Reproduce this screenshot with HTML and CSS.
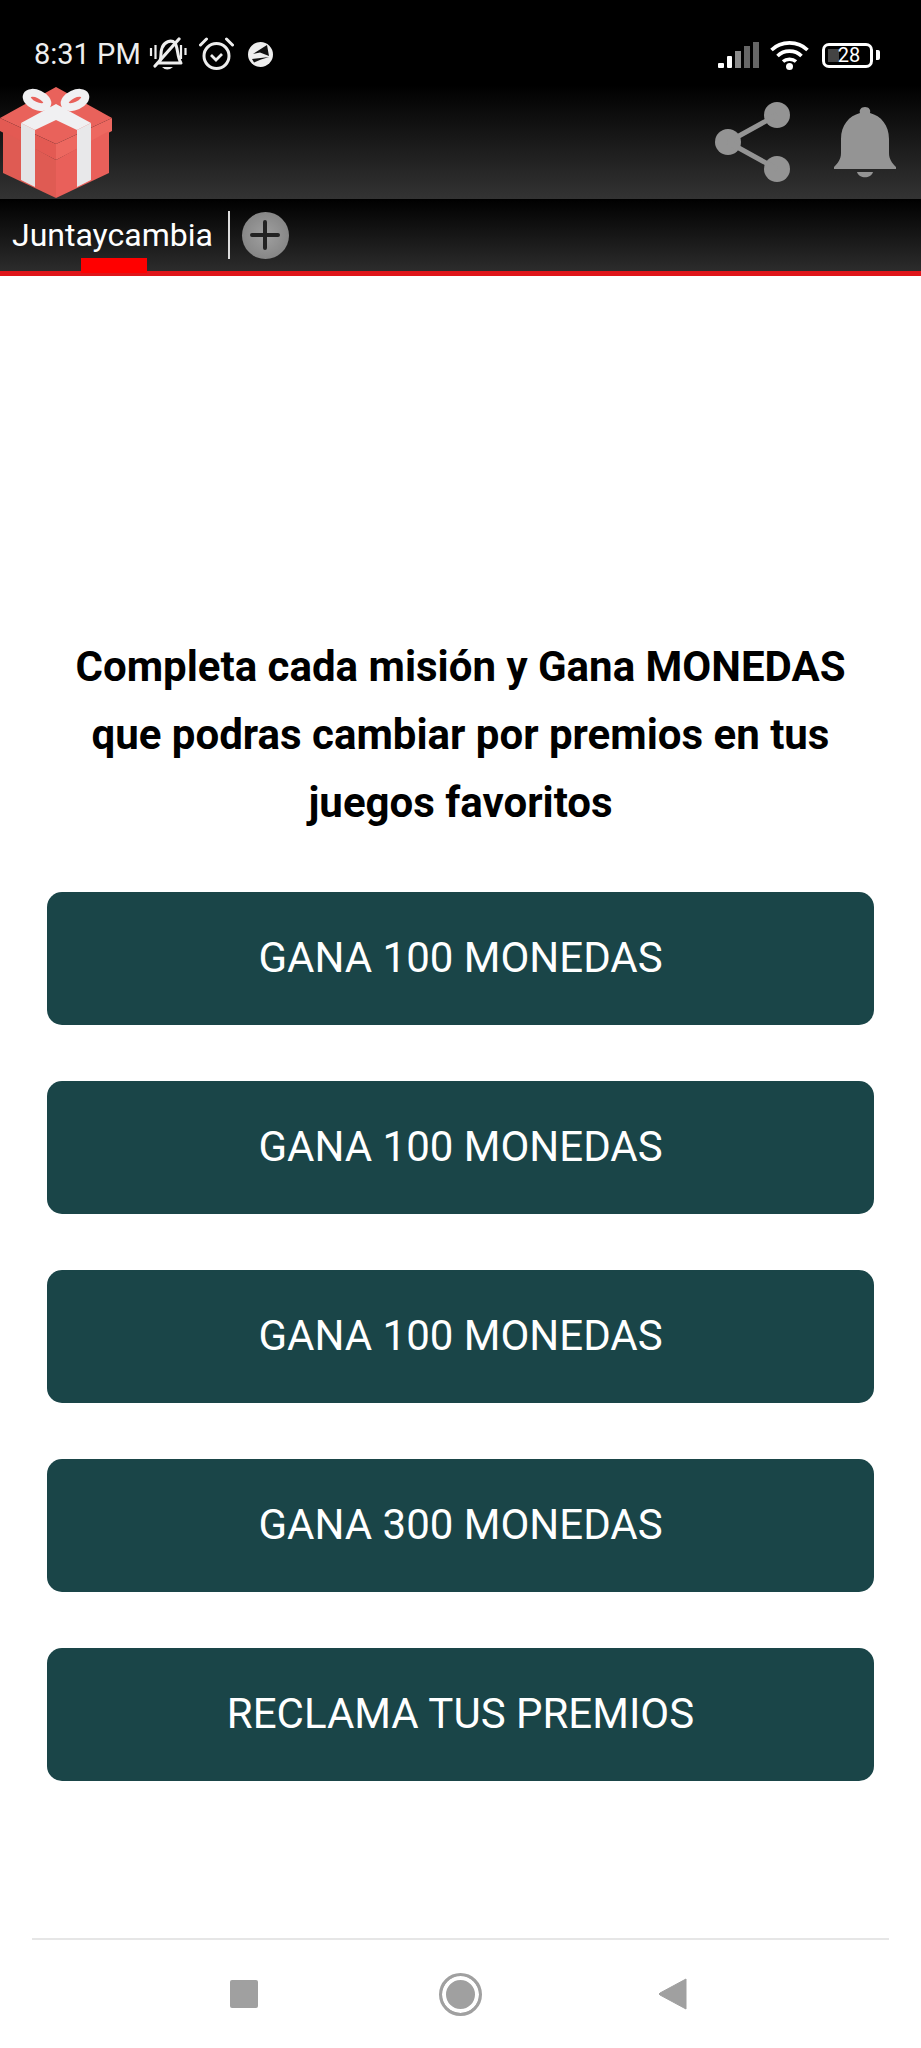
FILE: index.html
```html
<!DOCTYPE html>
<html lang="es">
<head>
  <meta charset="UTF-8" />
  <meta name="viewport" content="width=device-width, initial-scale=1" />
  <title>Juntaycambia</title>
  <link rel="stylesheet" href="styles.css">
</head>
<body>
  <header class="top">
    <div class="status">
      <div class="status-left">
        <span class="clock">8:31 PM</span>
        <svg class="ico-mute" width="38" height="34" viewBox="0 0 38 34">
          <path d="M10 26 C13 22 11 16 13 11 C15 5 22 2 26 6 C29 10 28 20 32 26 Z" fill="none" stroke="#eee" stroke-width="3" stroke-linejoin="round"/>
          <path d="M13 30 H24 Q18 35 13 30 Z" fill="#eee"/>
          <path d="M6 29 L30 2" stroke="#eee" stroke-width="3.200" stroke-linecap="round"/>
          <path d="M2 11 V19 M6.500 8 V22 M32 8 V22 M36.500 11 V18" stroke="#eee" stroke-width="2.200"/>
        </svg>
        <svg class="ico-alarm" width="35" height="34" viewBox="0 0 35 34">
          <circle cx="17.500" cy="19" r="12.500" fill="none" stroke="#eee" stroke-width="3"/>
          <path d="M12 18 L17 23 L23 17" fill="none" stroke="#eee" stroke-width="2.800"/>
          <path d="M1.500 8 L7.500 2 M33.500 8 L27.500 2" stroke="#eee" stroke-width="3" stroke-linecap="round"/>
        </svg>
        <svg class="ico-app" width="25" height="25" viewBox="0 0 25 25">
          <circle cx="12.500" cy="12.500" r="12.500" fill="#eee"/>
          <path d="M5 12 L19 3 L21 14 L12 10.500 Z" fill="#111"/>
          <path d="M4 17 L21 15 L13 17.500 L6 20.500 Z" fill="#111"/>
        </svg>
      </div>
      <div class="status-right">
        <svg width="41" height="26" viewBox="0 0 41 26">
          <rect x="0" y="21" width="6" height="5" rx="1" fill="#fff"/>
          <rect x="9" y="14" width="5" height="12" rx="1" fill="#fff"/>
          <rect x="17" y="9" width="6" height="17" fill="#8c8c8c"/>
          <rect x="26" y="4" width="6" height="22" fill="#666"/>
          <rect x="35" y="0" width="6" height="26" fill="#666"/>
        </svg>
        <svg class="ico-wifi" width="39" height="30" viewBox="0 0 39 30">
          <path d="M1.500 10 C11 0.500 28 0.500 37.500 10 M7.500 16 C14 9.500 25 9.500 31.500 16 M13 21.500 C16.500 18.500 22.500 18.500 26 21.500" fill="none" stroke="#fff" stroke-width="3.600"/>
          <circle cx="19.500" cy="26.500" r="3.500" fill="#fff"/>
        </svg>
        <div class="battery">
          <div class="battery-body">
            <span class="battery-fill"></span>
            <span class="battery-num">28</span>
          </div>
          <span class="battery-tip"></span>
        </div>
      </div>
    </div>

    <div class="appbar">
      <svg class="gift" width="112" height="112" viewBox="0 0 112 112">
        <path d="M56 0 L112 31 L56 57 L0 31 Z" fill="#e9625b"/>
        <path d="M0 31 L56 57 V73 L0 44 Z" fill="#e35a53"/>
        <path d="M112 31 L56 57 V73 L112 44 Z" fill="#ed6860"/>
        <path d="M3 44 L56 73 V111 L3 86 Z" fill="#df5b53"/>
        <path d="M109 44 L56 73 V111 L109 86 Z" fill="#e9605a"/>
        <path d="M21 36 L35 43 V100 L21 93 Z" fill="#e4e4e6"/>
        <path d="M91 36 L77 43 V100 L91 93 Z" fill="#e8e8ea"/>
        <path d="M21 36 L56 17 L91 36 L77 43 L56 33 L35 43 Z" fill="#f0f0f2"/>
        <ellipse cx="37" cy="13" rx="11" ry="6" transform="rotate(25 37 13)" fill="#e8605a" stroke="#f0f0f2" stroke-width="8"/>
        <ellipse cx="75" cy="13" rx="11" ry="6" transform="rotate(-25 75 13)" fill="#e8605a" stroke="#f0f0f2" stroke-width="8"/>
        <path d="M46 18 L56 24 L66 18 L66 26 L56 30 L46 26 Z" fill="#f0f0f2"/>
      </svg>
      <div class="appbar-actions">
        <svg width="80" height="80" viewBox="0 0 80 80">
          <circle cx="15" cy="40" r="13" fill="#949494"/>
          <circle cx="64" cy="13" r="13" fill="#949494"/>
          <circle cx="64" cy="67" r="13" fill="#949494"/>
          <path d="M15 40 L64 13 M15 40 L64 67" stroke="#949494" stroke-width="5"/>
        </svg>
        <svg class="bell" width="62" height="72" viewBox="0 0 62 72">
          <path d="M31 0 C35 0 37 3 36 6 C47 9 55 18 55 32 V46 C55 52 58 56 62 60 V62 H0 V60 C4 56 7 52 7 46 V32 C7 18 15 9 26 6 C25 3 27 0 31 0 Z" fill="#949494"/>
          <path d="M23 65 H39 C37 72 25 72 23 65 Z" fill="#949494"/>
        </svg>
      </div>
    </div>

    <div class="tabbar">
      <div class="tab">
        <span>Juntaycambia</span>
        <i class="tab-mark"></i>
      </div>
      <i class="tab-sep"></i>
      <span class="tab-add">
        <svg width="30" height="30" viewBox="0 0 30 30">
          <path d="M2 15 H28 M15 2 V28" stroke="#222" stroke-width="4" stroke-linecap="round"/>
        </svg>
      </span>
    </div>
  </header>

  <main class="content">
    <h1>Completa cada misión y Gana MONEDAS que podras cambiar por premios en tus juegos favoritos</h1>
    <div class="missions">
      <a class="btn">GANA 100 MONEDAS</a>
      <a class="btn">GANA 100 MONEDAS</a>
      <a class="btn">GANA 100 MONEDAS</a>
      <a class="btn">GANA 300 MONEDAS</a>
      <a class="btn">RECLAMA TUS PREMIOS</a>
    </div>
  </main>

  <footer class="navbar">
    <i class="nav-square"></i>
    <i class="nav-home"></i>
    <svg class="nav-back" width="30" height="32" viewBox="0 0 30 32">
      <path d="M28 1 V31 L2 17 Q0 16 2 15 Z" fill="#a0a0a0" stroke="#a0a0a0" stroke-linejoin="round"/>
    </svg>
  </footer>
</body>
</html>
```

FILE: styles.css
```css
* {
  box-sizing: border-box;
}
html, body {
  margin: 0;
  height: 2048px;
}
body {
  display: flex;
  flex-direction: column;
  background: #fff;
  font-family: Roboto, 'Liberation Sans', sans-serif;
  overflow: hidden;
}

/* top bars */
.top {
  height: 276px;
  border-bottom: 5px solid #df151a;
  display: flex;
  flex-direction: column;
}
.status {
  height: 85px;
  background: #000;
  padding: 37px 0 0 34px;
  display: flex;
  justify-content: space-between;
  align-items: flex-start;
  color: #eee;
}
.status-left {
  display: flex;
  align-items: center;
  gap: 8px;
}
.clock {
  font-size: 29px;
  line-height: 34px;
}
.ico-alarm {
  margin-left: 4px;
}
.ico-app {
  margin-left: 6px;
}
.status-right {
  display: flex;
  align-items: center;
  gap: 11px;
  padding: 3px 41px 0 0;
}
.battery {
  display: flex;
  align-items: center;
  gap: 3px;
  margin-left: 2px;
}
.battery-body {
  position: relative;
  width: 51px;
  height: 25px;
  border: 3px solid #fff;
  border-radius: 7px;
  overflow: hidden;
}
.battery-fill {
  position: absolute;
  left: 3px;
  top: 3px;
  bottom: 3px;
  width: 11px;
  background: #444;
}
.battery-num {
  position: absolute;
  left: 3px;
  right: 0;
  top: 0;
  text-align: center;
  font-size: 20px;
  line-height: 19px;
  color: #fff;
}
.battery-tip {
  width: 4px;
  height: 10px;
  background: #fff;
  border-radius: 0 2px 2px 0;
}
.appbar {
  height: 114px;
  background: linear-gradient(#000, #333);
  display: flex;
  justify-content: space-between;
  align-items: flex-start;
}
.gift {
  margin-top: 2px;
}
.appbar-actions {
  display: flex;
  gap: 41px;
  align-items: flex-start;
  padding: 17px 25px 0 0;
}
.bell {
  margin-top: 5px;
}
.tabbar {
  flex: 1;
  background: linear-gradient(#000, #2c2c2c);
  display: flex;
  align-items: center;
  padding-left: 12px;
  color: #fff;
}
.tab {
  position: relative;
  height: 100%;
  display: flex;
  align-items: center;
  font-size: 32px;
}
.tab-mark {
  position: absolute;
  left: 69px;
  bottom: -2px;
  width: 66px;
  height: 15px;
  background: #f00;
}
.tab-sep {
  width: 2px;
  height: 48px;
  margin-left: 15px;
  background: #ddd;
}
.tab-add {
  width: 47px;
  height: 47px;
  margin-left: 12px;
  border-radius: 50%;
  background: radial-gradient(circle, #a0a0a0, #808080 90%);
  display: flex;
  align-items: center;
  justify-content: center;
}

/* missions */
.content {
  flex: 1;
  padding: 357px 47px 0;
}
h1 {
  margin: 0 0 55px;
  padding: 0 12px;
  text-align: center;
  font-size: 42px;
  line-height: 68px;
  font-weight: 700;
  color: #000;
}
.missions {
  display: flex;
  flex-direction: column;
  gap: 56px;
}
.btn {
  height: 133px;
  padding-bottom: 3px;
  background: #1a4548;
  border-radius: 15px;
  color: #fff;
  font-size: 42px;
  display: flex;
  align-items: center;
  justify-content: center;
}

/* android nav */
.navbar {
  height: 110px;
  margin: 0 32px;
  padding-right: 4px;
  border-top: 2px solid #e6e6e6;
  display: flex;
  align-items: center;
  justify-content: center;
  gap: 181px;
}
.nav-square {
  width: 28px;
  height: 28px;
  border-radius: 2px;
  background: #a0a0a0;
}
.nav-home {
  width: 43px;
  height: 43px;
  border-radius: 50%;
  border: 3px solid #a0a0a0;
  background: #a0a0a0;
  box-shadow: inset 0 0 0 4px #fff;
}
.nav-back {
  margin-left: -5px;
}
```
